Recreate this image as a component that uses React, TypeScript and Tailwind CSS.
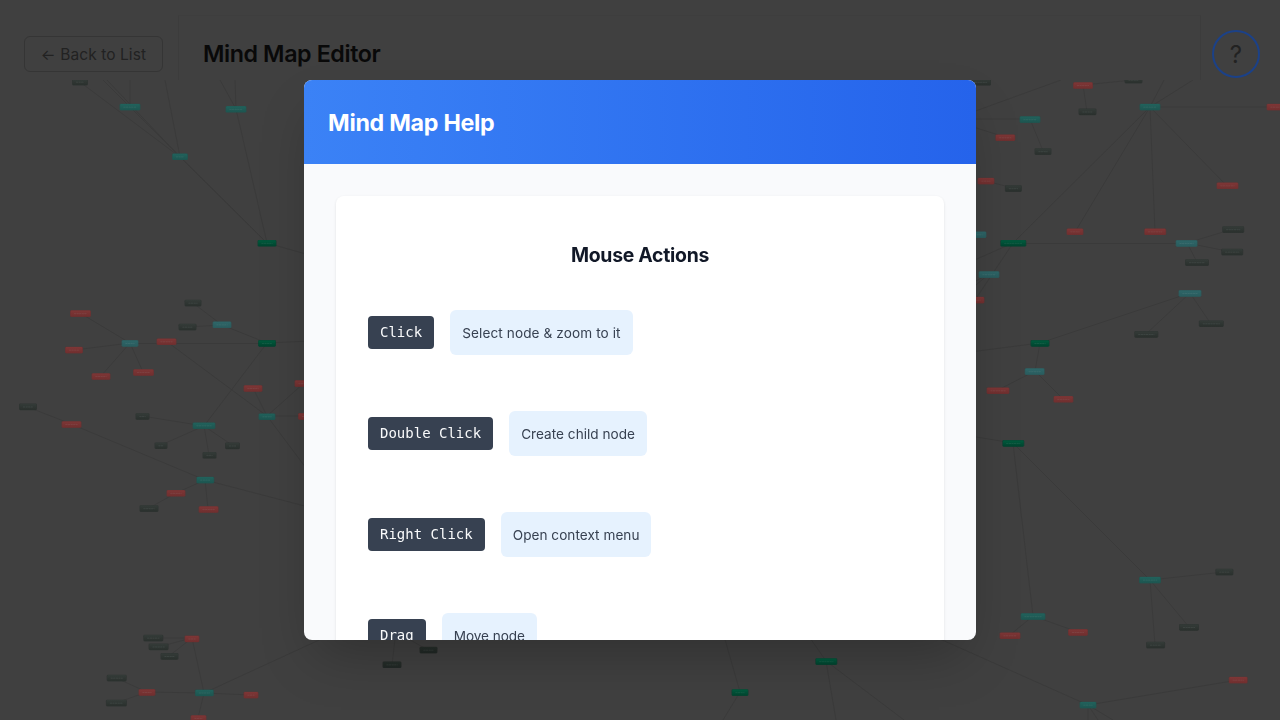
import React from "react";

type Kind = "g" | "t" | "c" | "r" | "s" | "k";
type MapNode = [x: number, y: number, w: number, kind: Kind];

const fills: Record<Kind, [string, string]> = {
  g: ["#005c3e", "#00442f"],
  t: ["#21625c", "#1d5550"],
  c: ["#2e6668", "#295c5e"],
  r: ["#7e3636", "#702f2f"],
  s: ["#343b38", "#2a302d"],
  k: ["#262e2a", "#202724"],
};

const nodes: MapNode[] = [
  [80, 82, 15, "s"], [130, 107, 20, "t"], [236, 109.2, 20, "t"], [180, 156.7, 15, "t"],
  [267, 243.2, 18, "g"], [80.5, 313.5, 20, "r"], [193, 303, 16, "s"], [187.5, 327, 17, "s"],
  [222, 324.7, 18, "c"], [130, 343.3, 16, "c"], [166.5, 341.6, 19, "r"], [74, 350, 17, "r"],
  [267, 343.3, 17, "g"], [101, 376.4, 18, "r"], [143.5, 372.4, 20, "r"], [28, 406.8, 17, "s"],
  [71.5, 424.4, 19, "r"], [142.5, 416.4, 13, "s"], [204, 425.6, 22, "t"], [161, 445.6, 12, "s"],
  [209.5, 455.2, 13, "s"], [232.5, 445.8, 14, "s"], [253, 388.4, 18, "r"], [267, 416.6, 16, "t"],
  [304, 383.5, 18, "r"], [307, 416.3, 17, "r"], [205.3, 480, 17, "t"], [176, 493.2, 18, "r"],
  [149, 508.5, 18, "s"], [208.6, 509.4, 19, "r"], [153.3, 638, 19, "s"], [192, 638.8, 14, "r"],
  [158.6, 646.8, 19, "s"], [169.5, 656.3, 17, "s"], [116.7, 678, 19, "s"], [147, 692.3, 16, "r"],
  [116.4, 703, 20, "s"], [204.4, 692.8, 18, "t"], [251, 695, 14, "r"], [198.5, 718.4, 15, "r"],
  [392, 664.7, 18, "k"], [428.5, 650, 17, "k"], [740, 692.5, 16, "g"], [826.3, 661.5, 21, "g"],
  [981, 82.2, 19, "s"], [1083, 85.4, 19, "r"], [1133.5, 80, 17, "s"], [1087.5, 111.8, 17, "s"],
  [1030, 119.5, 20, "t"], [1005.3, 137.6, 19, "r"], [1043, 151.5, 16, "s"], [1150, 107, 20, "t"],
  [1275, 107, 16, "r"], [1227.5, 185.7, 21, "r"], [986, 181, 16, "r"], [1013.4, 188.5, 16, "s"],
  [977, 234.6, 18, "c"], [1013.3, 243.2, 25, "g"], [1075, 231.7, 16, "r"], [1155.2, 231.7, 21, "r"],
  [1186.6, 243.3, 21, "c"], [1233.2, 229.5, 21, "s"], [1232.2, 252, 21, "s"], [1197, 262.5, 23, "s"],
  [989, 274.5, 20, "c"], [975, 300, 18, "r"], [1190, 293.3, 22, "c"], [1211.3, 323.6, 24, "s"],
  [1146.3, 334.3, 23, "s"], [1040, 343.3, 18, "g"], [1034.7, 371.5, 19, "c"], [998, 390.6, 22, "r"],
  [1063.4, 399.2, 19, "r"], [1013.3, 443.3, 21, "g"], [1150, 580, 21, "t"], [1224.4, 572, 17, "s"],
  [1189, 627.3, 19, "s"], [1155.6, 645, 18, "s"], [1033, 616.5, 24, "t"], [1010, 635.6, 20, "r"],
  [1078, 632.3, 19, "r"], [1238.2, 680, 18, "r"], [1088, 705, 16, "t"],
];

const links: [number, number, number, number][] = [
  [80, 82, 180, 157], [103, 80, 130, 107], [130, 80, 130, 107], [107, 80, 180, 157],
  [165, 80, 180, 157], [130, 107, 267, 243], [180, 157, 267, 243], [220, 80, 236, 109],
  [235, 80, 236, 109], [236, 109, 267, 243], [267, 243, 320, 258], [80, 313, 130, 343],
  [74, 350, 130, 343], [101, 376, 130, 343], [143, 372, 130, 343], [130, 343.5, 267, 343.5],
  [166, 341, 267, 416], [193, 303, 222, 325], [187, 327, 222, 325], [222, 325, 267, 343],
  [267, 343, 204, 426], [267, 343, 310, 341], [253, 388, 267, 416], [304, 383, 267, 416],
  [307, 416, 267, 416], [267, 416, 330, 500], [142, 416, 204, 426], [161, 445, 204, 426],
  [209, 455, 204, 426], [232, 445, 204, 426], [28, 407, 71, 424], [71, 424, 205, 480],
  [205, 480, 176, 493], [205, 480, 208, 509], [176, 493, 149, 508], [205, 480, 320, 510],
  [192, 638, 153, 638], [192, 638, 158, 647], [192, 638, 169, 656], [192, 638, 204, 693],
  [147, 692, 116, 678], [147, 692, 116, 703], [147, 692, 204, 693], [204, 693, 251, 695],
  [204, 693, 198, 718], [204, 693, 330, 635], [392, 665, 396, 630], [428, 650, 396, 632],
  [724, 636, 740, 692], [740, 692, 723, 720], [808, 635, 826, 661], [826, 661, 836, 720],
  [826, 661, 904, 720], [940, 639, 1088, 705], [970, 113, 1061, 80], [970, 119, 1030, 119],
  [970, 126, 1005, 137], [1030, 119, 1043, 151], [1083, 85, 1133, 80], [1083, 85, 1087, 112],
  [1150, 107, 1164, 80], [1150, 107, 1193, 80], [1150, 107, 1275, 107], [1150, 107, 1227, 186],
  [1150, 107, 1155, 232], [1150, 107, 1075, 232], [1150, 107, 1013, 243], [986, 181, 1013, 188],
  [1013, 243.5, 1187, 243.5], [1013, 243, 970, 262], [1013, 243, 975, 300], [989, 274, 970, 290],
  [989, 274, 970, 284], [1187, 243, 1233, 229], [1187, 243, 1232, 252],
  [1187, 243, 1197, 262], [1190, 293, 1211, 324], [1190, 293, 1146, 334], [1190, 293, 1040, 343],
  [1040, 343, 970, 352], [1040, 343, 1035, 371], [1035, 371, 998, 390], [1035, 371, 1063, 399],
  [1013, 443, 970, 436], [1013, 443, 1033, 616], [1013, 443, 1150, 580], [1150, 580, 1224, 572],
  [1150, 580, 1189, 627], [1150, 580, 1155, 645], [1033, 616, 1010, 635], [1033, 616, 1078, 632],
  [1088, 705, 1238, 680], [1088, 705, 1088, 720], [1088, 705, 1098, 720], [1088, 705, 1113, 720],
];

const actions = [
  { keys: "Click", label: "Select node & zoom to it", tracking: "tracking-[0.1px]", width: "w-[183px]" },
  { keys: "Double Click", label: "Create child node", tracking: "tracking-[0.02px]", width: "w-[138px]" },
  { keys: "Right Click", label: "Open context menu", tracking: "tracking-[0.03px]", width: "w-[150px]" },
  { keys: "Drag", label: "Move node", tracking: "tracking-[-0.05px]", width: "w-[95px]" },
];

function MindMapCanvas() {
  return (
    <svg className="block h-[640px] w-[1280px]" viewBox="0 80 1280 640">
      <defs>
        {(Object.keys(fills) as Kind[]).map((k) => (
          <linearGradient key={k} id={`fill-${k}`} x1="0" y1="0" x2="0" y2="1">
            <stop offset="0" stopColor={fills[k][0]} />
            <stop offset="1" stopColor={fills[k][1]} />
          </linearGradient>
        ))}
      </defs>
      <g stroke="#3a3a3a" strokeWidth="0.9">
        {links.map(([x1, y1, x2, y2], i) => (
          <line key={i} x1={x1} y1={y1} x2={x2} y2={y2} />
        ))}
      </g>
      {nodes.map(([x, y, w, kind], i) => (
        <g key={i}>
          <rect x={x - w / 2 - 0.5} y={y - 3.2} width={w + 1} height={6.6} rx="1.4" fill={fills[kind][1]} opacity="0.75" />
          <rect x={x - w / 2 + 0.2} y={y - 2.9} width={w - 0.4} height={6} rx="0.9" fill={`url(#fill-${kind})`} />
          <line x1={x - w / 2 + 3.4} y1={y + 0.2} x2={x + w / 2 - 3.4} y2={y + 0.2} stroke="#b0b8b5" strokeOpacity="0.14" strokeWidth="0.8" strokeDasharray="2.2 0.4" />
        </g>
      ))}
    </svg>
  );
}

function Header() {
  return (
    <header className="flex h-20 items-end">
      <div className="flex h-[65px] w-[178px] items-start pl-6 pt-[21px]">
        <button className="flex h-9 w-[139px] items-center justify-center rounded-md border border-[#353535] pt-0.5 text-[15.5px] leading-6 tracking-[0.09px] text-[#222222]">
          ← Back to List
        </button>
      </div>
      <div className="flex h-[65px] w-[1023px] items-start border-x border-t border-x-[#3c3c3c] border-t-[#3e3e3e] pl-6 pt-[22px]">
        <h1 className="text-[23.25px] font-semibold leading-8 tracking-[-0.4px] text-[#090909]">Mind Map Editor</h1>
      </div>
      <div className="flex h-[65px] flex-1 items-start pl-[11px] pt-[15px]">
        <button className="flex size-12 items-center justify-center rounded-full border-2 border-[#1b4188] pt-px text-2xl leading-8 text-[#222222]">
          ?
        </button>
      </div>
    </header>
  );
}

function HelpDialog() {
  return (
    <div className="fixed inset-0 flex items-center justify-center">
      <section className="flex h-[560px] w-[672px] flex-col overflow-hidden rounded-lg bg-[#f9fafc] shadow-[0_25px_50px_-12px_rgba(0,0,0,0.25)]">
        <div className="flex h-[84px] shrink-0 items-center bg-linear-to-r from-[#3b82f6] to-[#2563eb] px-6 pt-0.5">
          <h2 className="text-[23.25px] font-bold leading-8 tracking-[-0.28px] text-white">Mind Map Help</h2>
        </div>
        <div className="min-h-0 flex-1 overflow-hidden p-8">
          <div className="rounded-lg bg-white px-8 pt-[45px] shadow-[0_1px_3px_rgba(0,0,0,0.1)]">
            <h3 className="text-center text-[19.4px] font-bold leading-7 tracking-[-0.27px] text-[#111827]">Mouse Actions</h3>
            <div className="flex flex-col gap-14 pt-[41px] pb-14">
              {actions.map((a) => (
                <div key={a.keys} className="flex h-[45px] items-center gap-4">
                  <kbd className="flex h-[33px] items-center rounded bg-[#374151] px-3 pb-0.5 font-['DejaVu_Sans_Mono',monospace] text-sm leading-5 text-[#f9fafb]">
                    {a.keys}
                  </kbd>
                  <span className={`flex h-[45px] items-center whitespace-nowrap rounded-md bg-[#e6f2fe] pl-3 pt-0.5 text-[13.6px] text-[#374151] ${a.width} ${a.tracking}`}>
                    {a.label}
                  </span>
                </div>
              ))}
            </div>
          </div>
        </div>
      </section>
    </div>
  );
}

export default function App() {
  return (
    <main className="h-[720px] w-[1280px] overflow-hidden bg-[#404040] font-['Inter',sans-serif]">
      <Header />
      <MindMapCanvas />
      <HelpDialog />
    </main>
  );
}
